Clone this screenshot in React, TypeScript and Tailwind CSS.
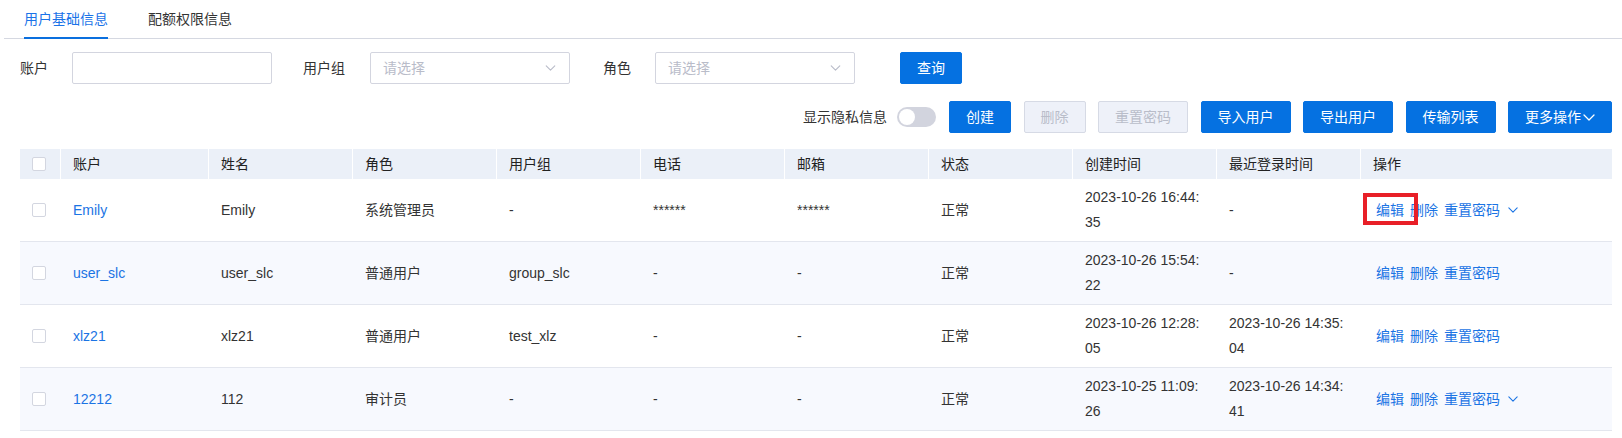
import { ReactNode } from "react";

const rows = [
  {
    account: "Emily",
    name: "Emily",
    role: "系统管理员",
    group: "-",
    phone: "******",
    email: "******",
    status: "正常",
    created: "2023-10-26 16:44:35",
    lastLogin: "-",
    more: true,
    marked: true,
  },
  {
    account: "user_slc",
    name: "user_slc",
    role: "普通用户",
    group: "group_slc",
    phone: "-",
    email: "-",
    status: "正常",
    created: "2023-10-26 15:54:22",
    lastLogin: "-",
    more: false,
    marked: false,
  },
  {
    account: "xlz21",
    name: "xlz21",
    role: "普通用户",
    group: "test_xlz",
    phone: "-",
    email: "-",
    status: "正常",
    created: "2023-10-26 12:28:05",
    lastLogin: "2023-10-26 14:35:04",
    more: false,
    marked: false,
  },
  {
    account: "12212",
    name: "112",
    role: "审计员",
    group: "-",
    phone: "-",
    email: "-",
    status: "正常",
    created: "2023-10-25 11:09:26",
    lastLogin: "2023-10-26 14:34:41",
    more: true,
    marked: false,
  },
];

const headers = ["账户", "姓名", "角色", "用户组", "电话", "邮箱", "状态", "创建时间", "最近登录时间", "操作"];

const GRID = "grid grid-cols-[40px_148px_repeat(8,144px)_252px]";

function Chevron({ className }: { className?: string }) {
  return (
    <svg viewBox="0 0 12 7" className={className} fill="none">
      <path d="M1 1l5 5 5-5" stroke="currentColor" strokeWidth="1.3" strokeLinecap="round" strokeLinejoin="round" />
    </svg>
  );
}

function Checkbox() {
  return <span className="block h-[14px] w-[14px] rounded-[2px] border border-[#d3d6e0] bg-white" />;
}

function Select() {
  return (
    <div className="flex h-8 w-[200px] items-center justify-between rounded-[2px] border border-[#d3d5df] bg-white pl-3 pr-[13px]">
      <span className="text-[#b9bcc9]">请选择</span>
      <Chevron className="h-[6px] w-[11px] text-[#b9bcc9]" />
    </div>
  );
}

function BlueButton({ children }: { children: ReactNode }) {
  return (
    <button className="flex h-8 items-center rounded-[2px] border border-[#0571e1] bg-[#0571e1] px-4 text-white">
      {children}
    </button>
  );
}

function DisabledButton({ children }: { children: ReactNode }) {
  return (
    <button className="flex h-8 items-center rounded-[2px] border border-[#d6dae5] bg-[#eef1f9] px-4 text-[#b9bdc9]">
      {children}
    </button>
  );
}

export default function App() {
  return (
    <div className="h-[438px] w-[1622px] overflow-hidden bg-white text-[14px] text-[#333] font-['Liberation_Sans','Noto_Sans_CJK_SC',sans-serif]">
      {/* Tabs */}
      <div className="ml-1 flex h-[39px] items-end border-b border-[#d5d8e1] pl-5">
        <div className="flex h-full flex-col justify-between text-[#1a73e8]">
          <span className="pt-[9px] leading-5">用户基础信息</span>
          <span className="-mb-px block h-[2px] bg-[#0a6fde]" />
        </div>
        <div className="ml-10 flex h-full flex-col">
          <span className="pt-[9px] leading-5 text-[#333]">配额权限信息</span>
        </div>
      </div>

      {/* Filter row */}
      <div className="mt-[13px] flex items-center pl-5">
        <span>账户</span>
        <div className="ml-6 h-8 w-[200px] rounded-[2px] border border-[#d3d5df] bg-white" />
        <span className="ml-[31px]">用户组</span>
        <div className="ml-[25px]">
          <Select />
        </div>
        <span className="ml-[33px]">角色</span>
        <div className="ml-6">
          <Select />
        </div>
        <div className="ml-[45px]">
          <BlueButton>查询</BlueButton>
        </div>
      </div>

      {/* Action row */}
      <div className="mt-[17px] flex items-center justify-end pr-[10px]">
        <span>显示隐私信息</span>
        <span className="ml-[10px] flex h-5 w-[39px] items-center rounded-full bg-[#d2d4de] px-[2px]">
          <span className="block h-4 w-4 rounded-full bg-white" />
        </span>
        <div className="ml-[13px] flex items-center gap-[12.5px]">
          <BlueButton>创建</BlueButton>
          <DisabledButton>删除</DisabledButton>
          <DisabledButton>重置密码</DisabledButton>
          <BlueButton>导入用户</BlueButton>
          <BlueButton>导出用户</BlueButton>
          <BlueButton>传输列表</BlueButton>
          <BlueButton>
            更多操作
            <Chevron className="ml-[2px] h-[7px] w-3 text-white" />
          </BlueButton>
        </div>
      </div>

      {/* Table */}
      <div className="ml-5 mt-4 w-[1592px]">
        <div className={`${GRID} h-[30px] bg-[#ebf0f8] text-[#222]`}>
          <div className="flex items-center pl-3">
            <Checkbox />
          </div>
          {headers.map((h) => (
            <div key={h} className="flex items-center border-l border-white px-3">
              {h}
            </div>
          ))}
        </div>

        {rows.map((r, i) => (
          <div
            key={r.account}
            className={`${GRID} h-[63px] border-b border-[#e3e6ee] ${i % 2 === 1 ? "bg-[#f7f9fe]" : "bg-white"}`}
          >
            <div className="flex items-center pl-3">
              <Checkbox />
            </div>
            <div className="flex items-center pl-[13px] pr-3 text-[#1b74e4]">{r.account}</div>
            {[r.name, r.role, r.group, r.phone, r.email, r.status, r.created, r.lastLogin].map((v, j) => (
              <div key={j} className="flex items-center pl-[13px] pr-[11px]">
                <div className="break-all leading-[25px]">{v}</div>
              </div>
            ))}
            <div className="flex items-center pl-4 text-[#1b74e4]">
              <span className="relative leading-5">
                编辑
                {r.marked && (
                  <span className="absolute -bottom-[5px] -left-[13px] -right-[14px] -top-[7px] border-4 border-[#e81f27]" />
                )}
              </span>
              <span className="ml-[6px]">删除</span>
              <span className="ml-[6px]">重置密码</span>
              {r.more && <Chevron className="ml-2 h-[6px] w-[10px] text-[#1b74e4]" />}
            </div>
          </div>
        ))}
      </div>
    </div>
  );
}
